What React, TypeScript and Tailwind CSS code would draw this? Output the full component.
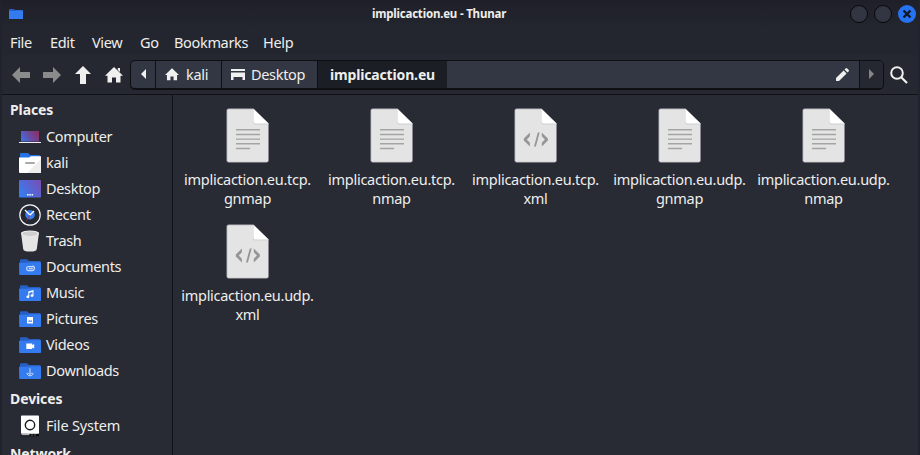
import type { ReactNode } from "react";

const places = ["Computer", "kali", "Desktop", "Recent", "Trash", "Documents", "Music", "Pictures", "Videos", "Downloads"];

const files = [
  { stem: "implicaction.eu.tcp.", ext: "gnmap" },
  { stem: "implicaction.eu.tcp.", ext: "nmap" },
  { stem: "implicaction.eu.tcp.", ext: "xml" },
  { stem: "implicaction.eu.udp.", ext: "gnmap" },
  { stem: "implicaction.eu.udp.", ext: "nmap" },
  { stem: "implicaction.eu.udp.", ext: "xml" },
];

function FolderGlyph({ name }: { name: string }) {
  switch (name) {
    case "Documents":
      return <path d="M14.5 10.6H9.6a1.7 1.7 0 0 0 0 4h3.6a2.2 2.2 0 0 0 0-4.5M9.8 12.6h4" fill="none" stroke="#c9dcfd" strokeWidth="1.1" />;
    case "Music":
      return <path d="M9.3 9.5 14.5 8v5.6a1.5 1.3 0 1 1-1-1.2V9.9l-3.2.9v4a1.5 1.3 0 1 1-1-1.2z" fill="#fff" />;
    case "Pictures":
      return (
        <>
          <path d="M8 9h6v6.5H8z" fill="#fff" />
          <path d="m9 13.7 1.3-1.7 1 .9.9-1.2 1.1 2z" fill="#3b82f6" />
        </>
      );
    case "Videos":
      return <path d="M7.3 9.5h5.9v1.4l2-1v4.6l-2-1V15H7.3z" fill="#fff" />;
    default:
      return <path d="M11 8.3v6M9 12.7l2 2 2-2M8 13c0 1.5 1 2.8 3 2.8s3-1.3 3-2.8" fill="none" stroke="#c9dcfd" strokeWidth="1" />;
  }
}

function PlaceIcon({ name }: { name: string }) {
  let body: ReactNode;
  if (name === "Computer") {
    body = (
      <>
        <defs>
          <linearGradient id="screen" x1="0" y1="0.7" x2="1" y2="0.3">
            <stop stopColor="#3f6fe0" />
            <stop offset="0.5" stopColor="#6a4a9e" />
            <stop offset="1" stopColor="#8c3069" />
          </linearGradient>
        </defs>
        <path d="M2 5h18v10.5H2z" fill="url(#screen)" />
        <path d="M0 16h22v1H0z" fill="#f2f2f2" />
      </>
    );
  } else if (name === "kali") {
    body = (
      <>
        <path d="M1 6V2q0-1 1-1h7l2 2h9q1 0 1 1v3H1z" fill="#2872e8" />
        <path d="M0 5.5h10l2-1.2h10V20q0 1-1 1H1q-1 0-1-1z" fill="#fff" />
        <path d="M22 7v14H8z" fill="#eeeeee" />
        <path d="M7 11h8" stroke="#aaa" strokeWidth="2" strokeLinecap="round" />
      </>
    );
  } else if (name === "Desktop") {
    body = (
      <>
        <defs>
          <linearGradient id="desk" x1="0" y1="0.8" x2="1" y2="0.2">
            <stop stopColor="#357df3" />
            <stop offset="1" stopColor="#7650b7" />
          </linearGradient>
        </defs>
        <rect y="2" width="22" height="17.5" rx="0.8" fill="url(#desk)" />
        <path d="M8 16h1.5v1.4H8zm2.3 0h1.5v1.4h-1.5zm2.3 0h1.5v1.4h-1.5z" fill="#fff" />
      </>
    );
  } else if (name === "Recent") {
    body = (
      <>
        <circle cx="11" cy="11" r="10.2" fill="#242832" stroke="#f4f4f4" strokeWidth="1.2" />
        <circle cx="11" cy="10.7" r="4.8" fill="#377cf2" />
        <path d="m6 6 5 5 4-4" fill="none" stroke="#fff" strokeWidth="1.3" />
        <path d="m11 11-3.5 6" stroke="#b52f43" strokeWidth="0.8" />
      </>
    );
  } else if (name === "Trash") {
    body = (
      <>
        <path d="M2 2.7 4.2 19q.3 2.6 6.8 2.6t6.8-2.6L20 2.7z" fill="#e5e5e5" />
        <ellipse cx="11" cy="3.2" rx="9" ry="2.8" fill="#f5f5f5" />
        <ellipse cx="11" cy="3.6" rx="7.8" ry="2.3" fill="#cecece" />
      </>
    );
  } else if (name === "File System") {
    body = (
      <>
        <rect x="2" y="0.5" width="18" height="18.2" rx="0.8" fill="#fff" />
        <circle cx="11" cy="10" r="4.7" fill="none" stroke="#17191d" strokeWidth="1.4" />
        <path d="M2 19h18v1.5q0 .8-.8.8H2.8q-.8 0-.8-.8z" fill="#08090b" />
        <path d="M2.5 19.2h8v1h-8z" fill="#ddd" />
        <path d="M12.5 19h1v2h-1zm3 0h1v2h-1z" fill="#666" />
      </>
    );
  } else {
    body = (
      <>
        <path d="M1 9V4.3q0-1 1-1h6l2 1.6h10.5q1 0 1 1V10z" fill="#285fc4" />
        <path d="M0 6.8h9l1.7-.6H22v12q0 .8-.8.8H1q-.8 0-.8-.8z" fill="#357bf0" />
        <FolderGlyph name={name} />
      </>
    );
  }
  return <svg className="h-[22px] w-[22px] shrink-0" viewBox="0 0 22 22">{body}</svg>;
}

function FileIcon({ xml }: { xml: boolean }) {
  return (
    <svg className="h-14 w-11" viewBox="0 0 44 56">
      <path d="M3 1.5h24.5L43 16.8V53q0 2-2 2H3q-2 0-2-2V3.5q0-2 2-2z" fill="#15171d" opacity="0.45" />
      <path d="M2.5.8h25l15 15v36.7q0 1.8-1.8 1.8H2.6Q.8 54.3.8 52.5V2.500Q.8.8 2.5.8z" fill="#e4e4e4" stroke="#918d98" strokeWidth=".6" />
      <path d="M27 1v13q0 2.500 2.500 2.500h13v-1z" fill="#cfcfcf" />
      <path d="M27.500.9v12.600q0 2 2 2h13z" fill="#fff" />
      {xml ? (
        <g fill="#969696">
          <path d="M15.900 24.500v3.700L12.800 31.500l3.100 3.300v3.700L9.800 32.600v-2.200zM27.800 24.500v3.700l3.100 3.300-3.100 3.300v3.700l6.100-5.900v-2.200z" />
          <path d="M23.800 24.500h1.900l-3.800 14H20z" />
        </g>
      ) : (
        <path d="M10 21.800h24M10 26.500h24M10 31.100h24M10 35.800h24M10 40.500h14" stroke="#a3a5a3" strokeWidth="1.400" />
      )}
    </svg>
  );
}

function Arrow({ turn, dim }: { turn: string; dim?: boolean }) {
  return (
    <svg className={`h-[18px] w-[18px] ${turn} ${dim ? "text-[#8b8b8c]" : "text-[#f0f0ee]"}`} viewBox="0 0 18 18">
      <path d="M0 9 8 1v5h9.500q.5 0 .5.500v5q0 .5-.5.500H8v5z" fill="currentColor" />
    </svg>
  );
}

function Home({ size, chimney }: { size: string; chimney?: boolean }) {
  return (
    <svg className={size} viewBox="0 0 18 16">
      <path d="M9 0 18 8.800h-2.500V15.500H11v-5H7v5H2.500V8.800H0z" fill="#f0f0ee" />
      {chimney && <path d="M12.800 1H15v4l-2.200-2z" fill="#f0f0ee" />}
    </svg>
  );
}

export default function App() {
  return (
    <div className="flex h-[455px] w-[920px] flex-col overflow-hidden border-x-2 border-[#20232d] bg-[#23262f] font-['Noto_Sans',sans-serif] text-[14.5px] tracking-[-0.33px] text-[#eeeeec]">
      <header className="grid h-7 shrink-0 grid-cols-[28px_1fr_70px] items-center bg-linear-to-b from-[#1f1f29] to-[#23262e]">
        <svg className="ml-[7px] h-[14px] w-[14px]" viewBox="0 0 14 14">
          <path d="M0 3V2.500Q0 2 .5 2H5l1 1h7.500q.5 0 .5.500V5H0z" fill="#285fc4" />
          <path d="M0 4h6l1-.5h7v8q0 .5-.5.500H.5q-.5 0-.5-.5z" fill="#357bf0" />
        </svg>
        <h1 className="text-center text-[11.5px] font-bold tracking-[-0.2px] whitespace-nowrap">implicaction.eu - Thunar</h1>
        <div className="flex items-center justify-end gap-[6px] pr-[2px]">
          <i className="h-[18px] w-[18px] rounded-full border border-[#08090c] bg-[#323642]" />
          <i className="h-[18px] w-[18px] rounded-full border border-[#08090c] bg-[#323642]" />
          <svg className="h-[18px] w-[18px]" viewBox="0 0 18 18">
            <circle cx="9" cy="9" r="9" fill="#2673f1" />
            <path d="m5.500 5.500 7 7m0-7-7 7" stroke="#101827" strokeWidth="2.400" />
          </svg>
        </div>
      </header>
      <nav className="flex h-[27px] shrink-0 items-center pt-[3px] pl-2">
        <span className="w-10">File</span>
        <span className="w-[42px]">Edit</span>
        <span className="w-12">View</span>
        <span className="w-[34px]">Go</span>
        <span className="w-[89px]">Bookmarks</span>
        <span>Help</span>
      </nav>
      <div className="flex h-10 shrink-0 items-center border-b border-[#101218] bg-[#252831]">
        <div className="flex w-32 items-center gap-[13px] pl-[10px]">
          <Arrow turn="rotate-0" dim />
          <Arrow turn="rotate-180" dim />
          <Arrow turn="rotate-90" />
          <Home size="h-4 w-[18px] shrink-0" chimney />
        </div>
        <div className="flex h-[30px] w-[754px] overflow-hidden rounded-[5px] border border-b-2 border-[#0d0f13] bg-[#333743]">
          <div className="flex w-[25px] items-center justify-center border-r border-[#0d0f13]">
            <svg className="h-[10px] w-[5px]" viewBox="0 0 5 10"><path d="M5 0v10L0 5z" fill="#f0f0ee" /></svg>
          </div>
          <div className="flex w-[66px] items-center gap-[7px] border-r border-[#0d0f13] pl-[9px]">
            <Home size="h-[13px] w-[14px] shrink-0" />
            <span className="pt-[2px]">kali</span>
          </div>
          <div className="flex w-24 items-center gap-[6px] border-r border-[#0d0f13] pl-[9px]">
            <svg className="h-[13px] w-[14px] shrink-0" viewBox="0 0 14 13"><path d="M0 1h14v2H0zM0 4.500h14V12h-2.500V9h-9v3H0z" fill="#f0f0ee" /></svg>
            <span className="pt-[2px]">Desktop</span>
          </div>
          <div className="flex w-[129px] items-center justify-center bg-[#1b1e24] text-[14px] font-bold tracking-[-0.15px]">implicaction.eu</div>
          <div className="flex flex-1 items-center justify-end pr-[10px]">
            <svg className="h-[13px] w-[13px]" viewBox="0 0 13 13"><path d="M0 10 7.600 2.500l3 3L3 13H0zM8.500 1.600 9.600.4q.8-.8 1.600 0l1.400 1.400q.8.8 0 1.600l-1.100 1.200z" fill="#f0f0ee" /></svg>
          </div>
          <div className="flex w-6 items-center justify-center border-l border-[#0d0f13] bg-[#252831]">
            <svg className="h-[10px] w-[5px]" viewBox="0 0 5 10"><path d="M0 0v10l5-5z" fill="#858688" /></svg>
          </div>
        </div>
        <svg className="ml-[6px] h-[18px] w-[18px]" viewBox="0 0 18 18" fill="none" stroke="#f0f0ee">
          <circle cx="7" cy="7" r="5.800" strokeWidth="2" />
          <path d="m11 11 6 6" strokeWidth="2.200" />
        </svg>
      </div>
      <main className="flex h-[360px] bg-[#282a34]">
        <aside className="h-[360px] w-[171px] shrink-0 overflow-hidden border-r border-[#101218]">
          <h2 className="flex h-[29px] items-center pl-2 text-[14px] font-bold tracking-[-0.1px]">Places</h2>
          {places.map((name) => (
            <div key={name} className="flex h-[26px] items-center gap-[5px] pl-[17px]">
              <PlaceIcon name={name} />
              <span>{name}</span>
            </div>
          ))}
          <h2 className="flex h-[29px] items-center pl-2 text-[14px] font-bold tracking-[-0.1px]">Devices</h2>
          <div className="flex h-[26px] items-center gap-[5px] pl-[17px]">
            <PlaceIcon name="File System" />
            <span className="tracking-[-0.2px]">File System</span>
          </div>
          <h2 className="flex h-[29px] items-center pl-2 text-[14px] font-bold tracking-[-0.1px]">Network</h2>
        </aside>
        <section className="grid flex-1 grid-cols-[repeat(5,144px)] content-start pt-[13px] pl-[2.5px]">
          {files.map((file) => (
            <div key={file.stem + file.ext} className="flex h-[116px] flex-col items-center">
              <FileIcon xml={file.ext === "xml"} />
              <div className="mt-[6px] text-center leading-[19px] tracking-[-0.28px]">
                {file.stem}
                <br />
                {file.ext}
              </div>
            </div>
          ))}
        </section>
      </main>
    </div>
  );
}
